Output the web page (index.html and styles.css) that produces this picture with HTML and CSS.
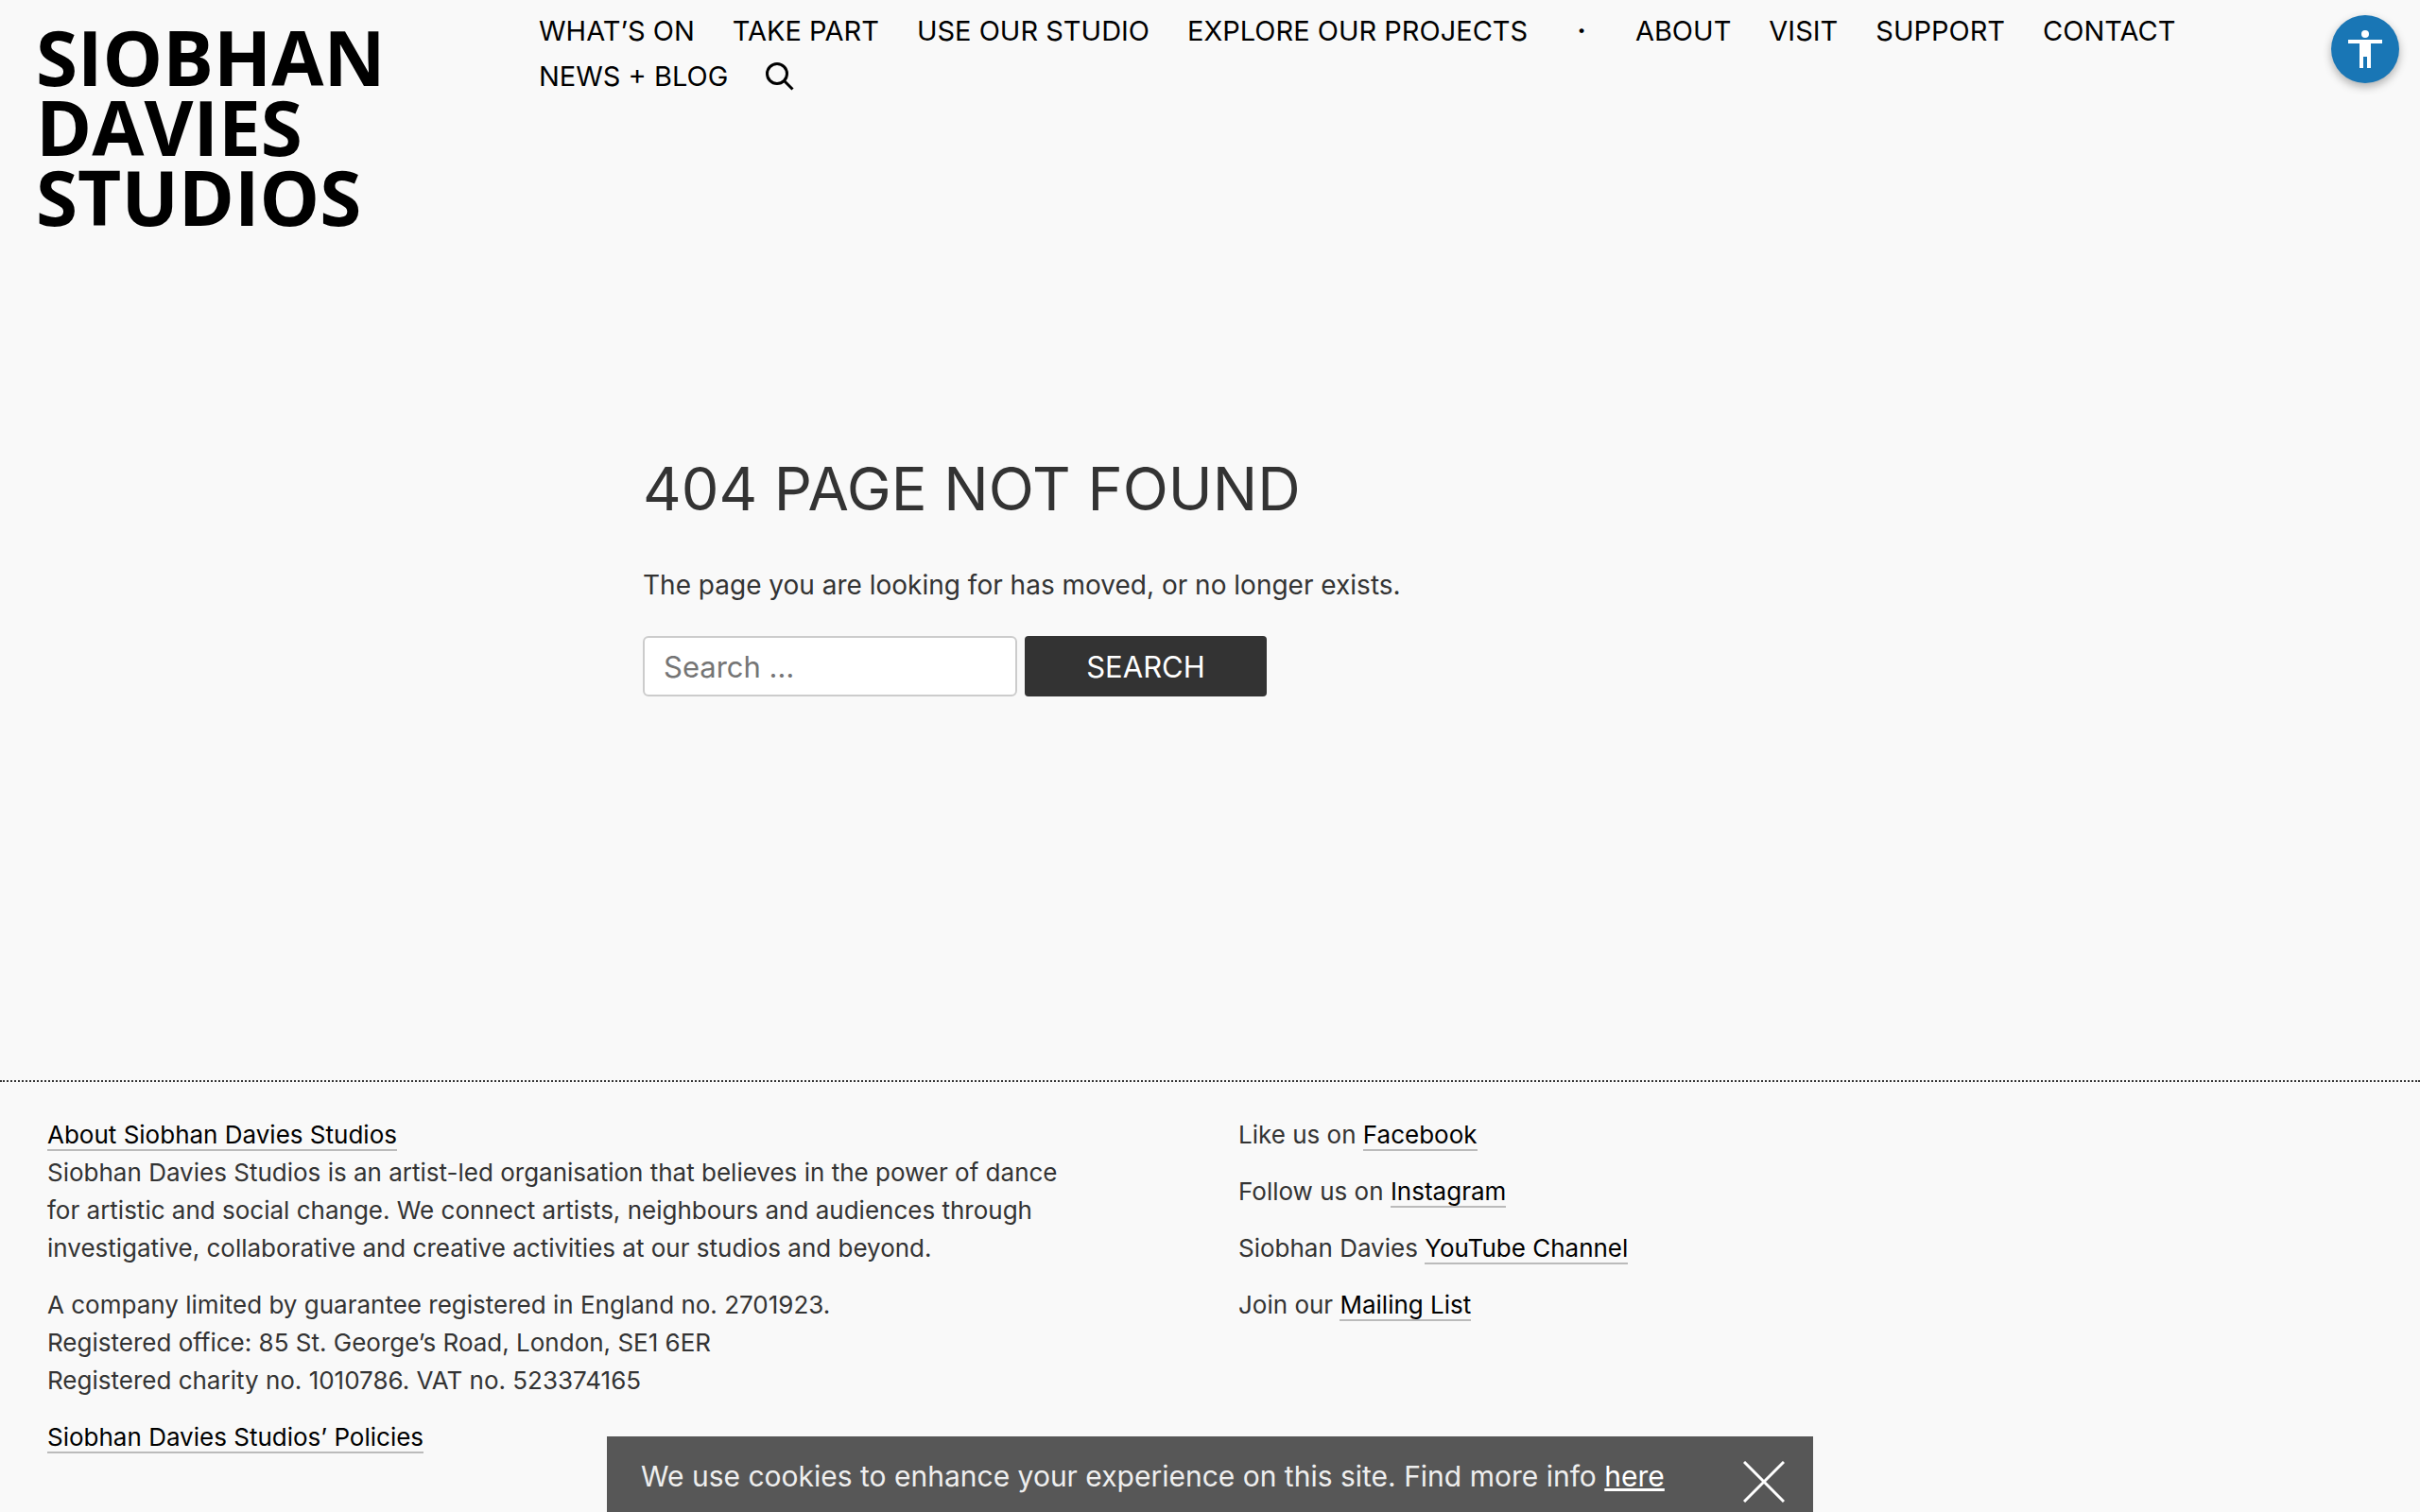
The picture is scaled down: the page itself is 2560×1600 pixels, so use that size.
FILE: index.html
```
<!DOCTYPE html>
<html lang="en">
<head>
  <meta charset="UTF-8" />
  <meta name="viewport" content="width=device-width, initial-scale=1" />
  <title>Page not found - Siobhan Davies Studios</title>
  <link rel="stylesheet" href="styles.css">
</head>
<body>

  <header class="site-header">
    <a class="logo" href="/">SIOBHAN<br>DAVIES<br>STUDIOS</a>

    <nav class="main-nav">
      <a href="/whats-on">WHAT’S ON</a>
      <a href="/take-part">TAKE PART</a>
      <a href="/use-our-studio">USE OUR STUDIO</a>
      <a href="/projects">EXPLORE OUR PROJECTS</a>
      <span class="nav-dot">·</span>
      <a href="/about">ABOUT</a>
      <a href="/visit">VISIT</a>
      <a href="/support">SUPPORT</a>
      <a href="/contact">CONTACT</a>
      <a href="/news">NEWS + BLOG</a>
      <button class="nav-search" type="button" aria-label="Search">
        <svg width="30" height="30" viewBox="0 0 30 30" fill="none" stroke="#000" stroke-width="3">
          <circle cx="12" cy="12" r="10.5" />
          <path d="M19.5 19.5l9 9" />
        </svg>
      </button>
    </nav>
  </header>

  <button class="access-button" type="button" aria-label="Accessibility options">
    <svg width="48" height="48" viewBox="0 0 24 24" fill="#fff">
      <circle cx="12" cy="4" r="2" />
      <path d="M21 9h-6v13h-2v-6h-2v6H9V9H3V7h18v2z" />
    </svg>
  </button>

  <main class="content">
    <h1>404 PAGE NOT FOUND</h1>
    <p>The page you are looking for has moved, or no longer exists.</p>

    <form class="search-form" action="/" method="get">
      <input type="search" name="s" placeholder="Search …" aria-label="Search for">
      <button type="submit">SEARCH</button>
    </form>
  </main>

  <footer class="site-footer">
    <div class="footer-about">
      <p>
        <a href="/about">About Siobhan Davies Studios</a><br>
        Siobhan Davies Studios is an artist-led organisation that believes in the power of dance
        for artistic and social change. We connect artists, neighbours and audiences through
        investigative, collaborative and creative activities at our studios and beyond.
      </p>
      <p>
        A company limited by guarantee registered in England no. 2701923.<br>
        Registered office: 85 St. George’s Road, London, SE1 6ER<br>
        Registered charity no. 1010786. VAT no. 523374165
      </p>
      <p><a href="/policies">Siobhan Davies Studios’ Policies</a></p>
    </div>

    <div class="footer-social">
      <p>Like us on <a href="#">Facebook</a></p>
      <p>Follow us on <a href="#">Instagram</a></p>
      <p>Siobhan Davies <a href="#">YouTube Channel</a></p>
      <p>Join our <a href="#">Mailing List</a></p>
    </div>
  </footer>

  <div class="cookie-bar">
    <p>We use cookies to enhance your experience on this site. Find more info <a href="/cookies">here</a></p>
    <button class="cookie-close" type="button" aria-label="Close">
      <svg width="44" height="44" viewBox="0 0 44 44" stroke="#fff" stroke-width="3">
        <path d="M1 1l42 42M43 1L1 43" />
      </svg>
    </button>
  </div>

</body>
</html>
```
FILE: styles.css
```
* {
  box-sizing: border-box;
}

body {
  margin: 0;
  background-color: #f9f9f9;
  color: #333;
  font-family: Inter, "Liberation Sans", Arial, sans-serif;
  font-size: 26px;
  line-height: 40px;
}

p {
  margin: 0 0 20px;
}

button {
  font-family: inherit;
  border: 0;
  padding: 0;
  cursor: pointer;
}

svg {
  display: block;
}

/* header */

.site-header {
  display: flex;
  align-items: flex-start;
  gap: 170px;
  padding: 9px 200px 0 38px;
}

.logo {
  flex: none;
  padding-top: 14px;
  width: 362px;
  color: #000;
  font-family: "Open Sans", "Noto Sans", sans-serif;
  font-size: 80px;
  font-weight: 700;
  line-height: 74px;
  text-decoration: none;
}

.main-nav {
  display: flex;
  flex-wrap: wrap;
  align-items: center;
  column-gap: 40px;
  font-size: 29px;
  line-height: 48px;
}

.main-nav a {
  color: #000;
  text-decoration: none;
}

.nav-dot {
  margin: 0 12px;
  color: #000;
  font-weight: 700;
}

.nav-search {
  background: none;
}

.access-button {
  position: fixed;
  top: 16px;
  right: 22px;
  width: 72px;
  height: 72px;
  border-radius: 50%;
  background-color: #1976b5;
  box-shadow: 0 4px 10px rgba(0, 0, 0, 0.3);
}

.access-button svg {
  margin: 0 auto;
}

/* content */

.content {
  padding: 232px 680px 406px;
}

.content h1 {
  margin: 0 0 42px;
  font-size: 63px;
  font-weight: 400;
  line-height: 80px;
}

.content p {
  margin-bottom: 34px;
  font-size: 28px;
}

.search-form {
  display: flex;
  gap: 8px;
}

.search-form input {
  width: 396px;
  height: 64px;
  margin: 0;
  padding: 0 20px;
  border: 2px solid #ccc;
  border-radius: 6px;
  background-color: #fff;
  color: #333;
  font-family: inherit;
  font-size: 31px;
  appearance: none;
}

.search-form input::placeholder {
  color: #757575;
}

.search-form button {
  width: 256px;
  height: 64px;
  border-radius: 4px;
  background-color: #333;
  color: #fff;
  font-size: 31px;
}

/* footer */

.site-footer {
  display: grid;
  grid-template-columns: 1fr 1fr;
  gap: 60px;
  padding: 36px 50px 20px;
  border-top: 2px dotted #333;
}

.footer-about {
  padding-right: 100px;
}

.site-footer a {
  color: #000;
  text-decoration: none;
  border-bottom: 2px solid #bbb;
}

/* cookie notice */

.cookie-bar {
  position: fixed;
  bottom: 0;
  left: calc(25% + 2px);
  right: calc(25% + 2px);
  display: flex;
  justify-content: space-between;
  height: 80px;
  padding: 22px 30px 0 36px;
  background-color: #575757;
  color: #eee;
  font-size: 30px;
}

.cookie-bar p {
  margin: 0;
}

.cookie-bar a {
  color: #fff;
  text-decoration: underline;
}

.cookie-close {
  align-self: flex-start;
  padding-top: 4px;
  background: none;
}
```
